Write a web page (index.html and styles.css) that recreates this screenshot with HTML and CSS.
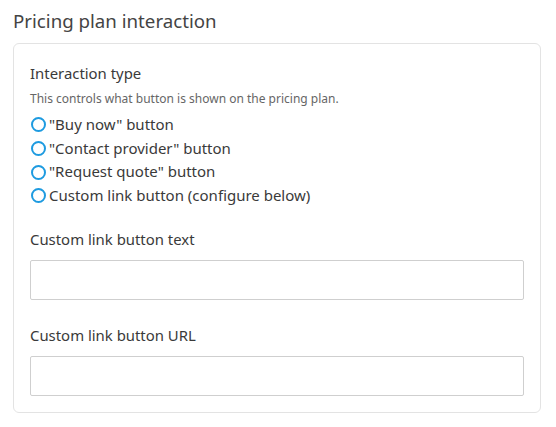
FILE: index.html
```html
<!DOCTYPE html>
<html>
<head>
<meta charset="utf-8">
<link rel="stylesheet" href="styles.css">
</head>
<body>
<div class="page">
  <h2 class="title">Pricing plan interaction</h2>
  <div class="card">
    <div class="field">
      <div class="label">Interaction type</div>
      <div class="help">This controls what button is shown on the pricing plan.</div>
      <div class="radios">
        <label class="radio"><span class="circle"></span>"Buy now" button</label>
        <label class="radio"><span class="circle"></span>"Contact provider" button</label>
        <label class="radio"><span class="circle"></span>"Request quote" button</label>
        <label class="radio"><span class="circle"></span>Custom link button (configure below)</label>
      </div>
    </div>
    <div class="field text-field">
      <div class="label">Custom link button text</div>
      <div class="input"></div>
    </div>
    <div class="field text-field">
      <div class="label">Custom link button URL</div>
      <div class="input"></div>
    </div>
  </div>
</div>
</body>
</html>
```

FILE: styles.css
```css
html, body {
  margin: 0;
  padding: 0;
  background: #ffffff;
}
body {
  font-family: "Noto Sans", "Open Sans", sans-serif;
  color: #3a3a3a;
}
.page {
  padding: 7px 15px 0 13px;
}
.title {
  margin: 0 0 8px 0;
  font-size: 18.7px;
  font-weight: 400;
  line-height: 28px;
  color: #444444;
}
.card {
  border: 1px solid #e3e3e3;
  border-radius: 6px;
  padding: 18px 16px 16px 16px;
}
.label {
  font-size: 14.9px;
  line-height: 22px;
  color: #3a3a3a;
}
.help {
  font-size: 12px;
  line-height: 18px;
  color: #666666;
  margin-top: 6px;
  margin-bottom: 5px;
}
.radios {
  display: flex;
  flex-direction: column;
}
.radio {
  display: flex;
  align-items: center;
  gap: 3px;
  font-size: 15px;
  line-height: 23.7px;
  color: #3a3a3a;
}
.circle {
  width: 11px;
  height: 11px;
  border: 2px solid #1e9be0;
  border-radius: 50%;
  flex: none;
  margin-left: 1px;
}
.text-field {
  margin-top: 20px;
}
.text-field + .text-field {
  margin-top: 24px;
}
.input {
  margin-top: 10px;
  height: 38px;
  border: 1px solid #cfcfcf;
  border-radius: 2px;
}
```
